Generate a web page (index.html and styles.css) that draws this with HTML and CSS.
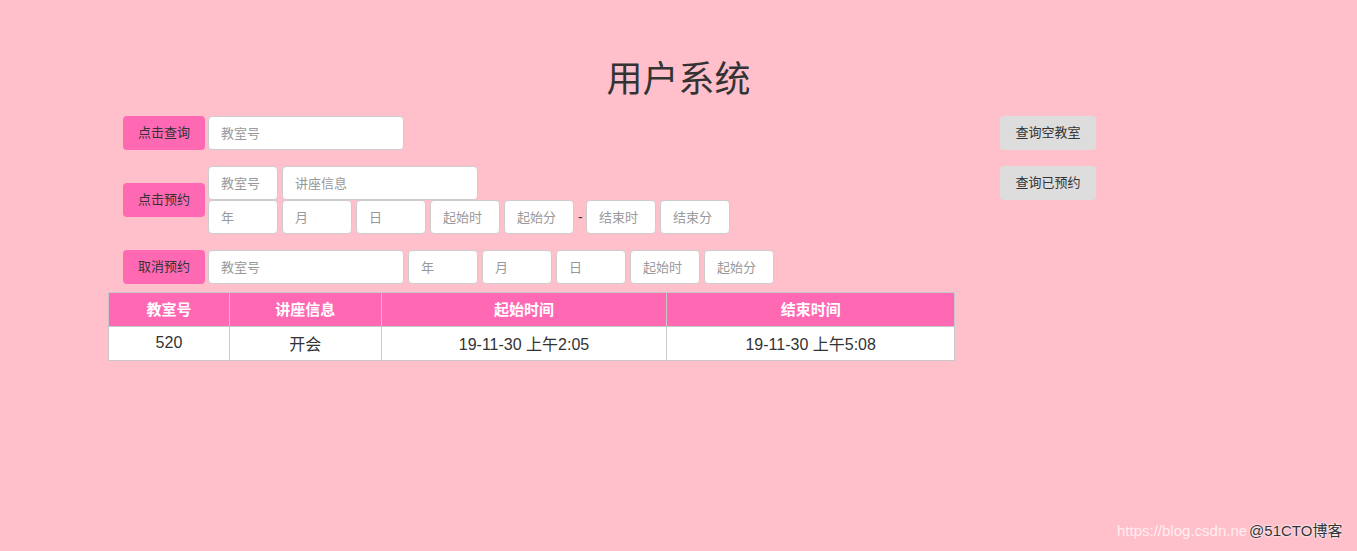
FILE: index.html
```html
<!DOCTYPE html>
<html lang="zh">
<head>
<meta charset="utf-8">
<title>用户系统</title>
<link rel="stylesheet" href="styles.css">
</head>
<body>
<h1 class="title">用户系统</h1>
<div class="panel">
  <div class="row">
    <div class="left">
      <button class="btn btn-pink">点击查询</button>
      <input class="field w-lg" placeholder="教室号">
    </div>
    <button class="btn btn-gray">查询空教室</button>
  </div>
  <div class="row">
    <div class="left center">
      <button class="btn btn-pink">点击预约</button>
      <div class="stack">
        <div class="line">
          <input class="field w-sm" placeholder="教室号">
          <input class="field w-lg" placeholder="讲座信息">
        </div>
        <div class="line">
          <input class="field w-sm" placeholder="年">
          <input class="field w-sm" placeholder="月">
          <input class="field w-sm" placeholder="日">
          <input class="field w-sm" placeholder="起始时">
          <input class="field w-sm" placeholder="起始分">
          <span class="dash">-</span>
          <input class="field w-sm" placeholder="结束时">
          <input class="field w-sm" placeholder="结束分">
        </div>
      </div>
    </div>
    <button class="btn btn-gray">查询已预约</button>
  </div>
  <div class="row">
    <div class="left">
      <button class="btn btn-pink">取消预约</button>
      <div class="line">
        <input class="field w-lg" placeholder="教室号">
        <input class="field w-sm" placeholder="年">
        <input class="field w-sm" placeholder="月">
        <input class="field w-sm" placeholder="日">
        <input class="field w-sm" placeholder="起始时">
        <input class="field w-sm" placeholder="起始分">
      </div>
    </div>
  </div>
</div>
<table class="data">
  <thead>
    <tr><th class="c1">教室号</th><th class="c2">讲座信息</th><th class="c3">起始时间</th><th class="c4">结束时间</th></tr>
  </thead>
  <tbody>
    <tr><td>520</td><td>开会</td><td>19-11-30 上午2:05</td><td>19-11-30 上午5:08</td></tr>
  </tbody>
</table>
<div class="watermark"><span class="wm-url">https://blog.csdn.ne</span><span class="wm-brand">@51CTO博客</span></div>
</body>
</html>
```
FILE: styles.css
```css
* { box-sizing: border-box; }
html, body { height: 100%; }
body {
  margin: 0;
  background: #ffc0cb;
  color: #333;
  font-family: "Liberation Sans", "Noto Sans CJK SC", sans-serif;
  font-size: 14px;
  position: relative;
  overflow: hidden;
}
.title {
  margin: 56px 0 0;
  height: 40px;
  line-height: 40px;
  font-size: 36px;
  font-weight: 400;
  text-align: center;
  font-family: "Noto Sans CJK SC", sans-serif;
  color: #333;
}
.panel {
  margin: 20px 0 0 123px;
  width: 973px;
  display: flex;
  flex-direction: column;
  gap: 16px;
}
.row {
  display: flex;
  justify-content: space-between;
  align-items: flex-start;
}
.left {
  display: flex;
  align-items: flex-start;
}
.left.center { align-items: center; }
.stack { display: flex; flex-direction: column; }
.line { display: flex; align-items: center; gap: 4px; }
.btn {
  height: 34px;
  border: none;
  border-radius: 4px;
  font-family: "Noto Sans CJK SC", sans-serif;
  font-size: 13px;
  line-height: 32px;
  padding: 0 0 2px;
  color: #333;
  cursor: pointer;
}
.btn-pink { background: #ff69b4; width: 82px; margin-right: 3px; }
.btn-gray { background: #dddddd; width: 96px; }
.field {
  height: 34px;
  border: 1px solid #ccc;
  border-radius: 4px;
  background: #fff;
  padding: 0 12px 2px;
  font-family: "Noto Sans CJK SC", sans-serif;
  font-size: 13px;
  color: #555;
  outline: none;
  margin: 0;
}
.field::placeholder { color: #999; }
.w-lg { width: 196px; }
.w-sm { width: 70px; }
.dash { width: 4px; font-size: 14px; color: #333; text-align: center; }
.data {
  margin: 8px 0 0 108px;
  width: 847px;
  border-collapse: collapse;
  background: #fff;
  font-size: 16px;
}
.data th, .data td {
  border: 1px solid #c8c8c8;
  height: 34px;
  text-align: center;
  padding: 0;
}
.data th {
  background: #ff69b4;
  color: #fff;
  font-weight: 700;
  font-family: "Noto Sans CJK SC", sans-serif;
  font-size: 15px;
  padding-bottom: 2px;
}
.data td { color: #333; padding-bottom: 2px; }
.c1 { width: 121px; }
.c2 { width: 152px; }
.c3 { width: 286px; }
.c4 { width: 288px; }
.watermark {
  position: absolute;
  left: 1117px;
  top: 520px;
  line-height: 22px;
  white-space: nowrap;
  display: flex;
  align-items: baseline;
}
.wm-url { color: rgba(255, 255, 255, 0.75); font-family: "Liberation Sans", sans-serif; font-size: 15px; }
.wm-brand {
  color: #333;
  font-size: 15px;
  margin-left: 2px;
  font-family: "Liberation Sans", "Noto Sans CJK SC", sans-serif;
  text-shadow: 0 0 2px #fff, 0 0 2px #fff;
}
```
